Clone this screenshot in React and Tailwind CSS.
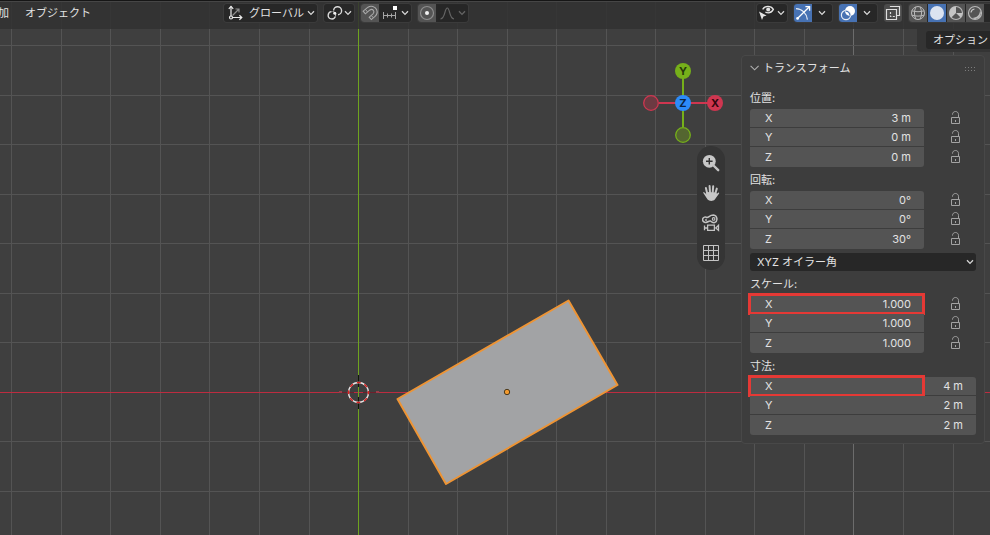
import React from 'react';

const GRID = 49.54;
const ORIGIN_X = 358.56;
const ORIGIN_Y = 392.4;
const steps = Array.from({ length: 81 }, (_, i) => i - 30);

function Scene() {
  return (
    <svg className="absolute inset-0 h-full w-full" aria-hidden="true">
      <g fill="#545454">
        {steps.map((n) => (
          <rect key={`v${n}`} x={Math.floor(ORIGIN_X + n * GRID)} y="0" width="1" height="100%" fill={n === 10 ? '#6c6c6c' : '#545454'} />
        ))}
        {steps.map((n) => (
          <rect key={`h${n}`} x="0" y={Math.floor(ORIGIN_Y + n * GRID)} width="100%" height="1" />
        ))}
      </g>
      <rect x="0" y="392" width="100%" height="1" fill="#bd2c40" />
      <rect x="358" y="0" width="1" height="100%" fill="#6fa31f" />

      {/* selected object */}
      <polygon points="397.5,399 568.5,300.5 617.5,385 446,484" fill="#a2a3a5" stroke="#ee9434" strokeWidth="2" strokeLinejoin="round" />
      <circle cx="507" cy="392" r="2.7" fill="#f39a2e" stroke="#4a3a20" strokeWidth="1" />

      {/* 3D cursor */}
      <g shapeRendering="crispEdges">
        <rect x="342" y="392" width="12" height="1" fill="#6d1f2b" />
        <rect x="363" y="392" width="13" height="1" fill="#6d1f2b" />
        <rect x="339" y="391" width="3" height="2" fill="#9c3c49" />
        <rect x="376" y="391" width="3" height="2" fill="#9c3c49" />
        <rect x="358" y="375" width="1" height="12" fill="#10180a" />
        <rect x="358" y="397" width="1" height="12" fill="#10180a" />
      </g>
      <circle cx="358.5" cy="392.5" r="10" fill="none" stroke="#e8e8e8" strokeWidth="1.3" />
      <circle cx="358.5" cy="392.5" r="10" fill="none" stroke="#d92323" strokeWidth="1.4" strokeDasharray="3.927" strokeDashoffset="2" />
    </svg>
  );
}

function Icon({ children, className = '' }) {
  return (
    <svg width="18" height="18" viewBox="0 0 18 18" fill="none" stroke="#d6d6d6" strokeWidth="1.2" className={`shrink-0 ${className}`} aria-hidden="true">
      {children}
    </svg>
  );
}

function Chevron({ className = '' }) {
  return (
    <svg width="8" height="6" viewBox="0 0 8 6" fill="none" stroke="#d6d6d6" strokeWidth="1.3" className={`shrink-0 ${className}`} aria-hidden="true">
      <path d="M1 1.2 4 4.4 7 1.2" />
    </svg>
  );
}

function Group({ children, className = '' }) {
  return (
    <div className={`flex h-[18px] shrink-0 items-center overflow-hidden rounded-[3px] bg-[#272727] shadow-[0_0_0_1px_#3b3b3b] ${className}`}>
      {children}
    </div>
  );
}

function Header() {
  return (
    <header className="flex h-[29px] shrink-0 items-start border-t border-[#161616] bg-[#313131]/85">
      <div className="flex w-full items-start border-t border-[#464646] pt-0.5">
        <nav className="flex h-[18px] w-56 shrink-0 items-center gap-4 overflow-hidden">
          <button className="-ml-0.5">加</button>
          <button>オブジェクト</button>
        </nav>

        <div className="flex items-center gap-[7px]">
          <Group className="relative w-[93px]">
            <Icon className="absolute left-0.5">
              <path d="M5 12V2.5M6.5 13.5H15.5" stroke="#ececec" />
              <path d="M2.8 4.8 5 2.3 7.2 4.8M13.4 11.3 15.8 13.5 13.4 15.7" stroke="#ececec" />
              <circle cx="5" cy="13.5" r="1.5" stroke="#ececec" />
              <path d="M6.5 11.5 12.5 5.5M9.5 5H13V8.5" stroke="#8e8e8e" />
            </Icon>
            <select aria-label="トランスフォーム座標系" className="h-full w-full appearance-none pl-[25px] outline-none">
              <option>グローバル</option>
            </select>
            <Chevron className="pointer-events-none absolute right-[2px]" />
          </Group>

          <button aria-label="ピボットポイント">
            <Group className="w-[30px] pl-0.5">
              <Icon>
                <path d="M5.6 7.6A3.7 3.7 0 1 0 9.4 12.4M7.6 6.6A4 4 0 1 1 12 10.7" stroke="#d9d9d9" strokeWidth="1.4" />
                <path d="M6.6 7.6A3.7 3.7 0 0 1 9.6 11.8" stroke="#d9d9d9" strokeWidth="1" />
                <circle cx="8.8" cy="9.2" r="1.5" fill="#f2f2f2" stroke="none" />
              </Icon>
              <Chevron />
            </Group>
          </button>

          <Group className="w-[50px]">
            <button aria-label="スナップ" className="bg-[#545454]">
              <Icon>
                <path
                  d="M2.2 7.2 7 3.2C10 1.2 14 2.4 15.6 5.6 16.6 8 16 10.6 14 12.4L10.4 15.6 8.2 13.2 12 9.8C13.2 8.6 13.2 7.4 12.4 6.4 11.4 5.2 10 5.2 8.6 6.2L4.4 9.8Z"
                  stroke="#a9a9a9"
                  strokeWidth="1.1"
                />
                <path d="M4.4 5.4 6.6 8M10.2 11.4 12.4 13.8" stroke="#a9a9a9" strokeWidth="1" />
              </Icon>
            </button>
            <button aria-label="スナップ先" className="flex h-full items-center gap-[3px] pl-1">
              <svg width="15" height="18" viewBox="0 0 15 18" fill="none" stroke="#a6a6a6" aria-hidden="true">
                <path d="M0.5 8V15M4.5 9.5V13.5M8.5 9.5V13.5M12.5 8V15M0 11.5H13" />
                <rect x="10" y="2" width="4" height="4" fill="#fff" stroke="none" />
              </svg>
              <Chevron />
            </button>
          </Group>

          <Group className="w-[50px] bg-[#2f2f2f]">
            <button aria-label="プロポーショナル編集" className="bg-[#545454]">
              <Icon>
                <circle cx="9" cy="9" r="6.5" stroke="#8f8f8f" />
                <circle cx="9" cy="9" r="2" fill="#f2f2f2" stroke="none" />
              </Icon>
            </button>
            <button aria-label="減衰タイプ" disabled className="flex h-full items-center gap-[3px] pl-1 opacity-35">
              <svg width="15" height="18" viewBox="0 0 15 18" fill="none" stroke="#d6d6d6" strokeWidth="1.2" aria-hidden="true">
                <path d="M0.5 15C5.5 14.5 4.5 4 7.3 4S9 14.5 14 15" />
              </svg>
              <Chevron />
            </button>
          </Group>
        </div>

        <div className="ml-auto flex items-center gap-[7px]">
          <button aria-label="オブジェクトの種類の可視性">
            <Group className="w-[30px] pl-0.5">
              <Icon>
                <path d="M3.6 5.4C6 1.4 11.8 1.4 14.4 5.4 12.4 8.8 9 9.4 6.4 8.2" stroke="#e4e4e4" strokeWidth="1.3" />
                <circle cx="9.2" cy="5.4" r="2" fill="#e4e4e4" stroke="none" />
                <path d="M0 7.6 7.6 11.6 4.4 12.4 3 16Z" fill="#e4e4e4" stroke="none" />
              </Icon>
              <Chevron />
            </Group>
          </button>

          <Group className="w-[38px]">
            <button aria-label="ギズモ" className="bg-[#4772b3]">
              <Icon>
                <path d="M2 4.6C8 4.8 12.8 9.4 13.4 15.6" stroke="#e8edf5" strokeWidth="1.2" />
                <path d="M4.2 13.8 15.4 2.8M11.4 2.6H15.6V6.8" stroke="#fff" strokeWidth="1.3" />
                <circle cx="3.6" cy="14.4" r="1.4" fill="#fff" stroke="none" />
              </Icon>
            </button>
            <button aria-label="ギズモ設定" className="flex h-full w-5 items-center justify-center"><Chevron /></button>
          </Group>

          <Group className="w-[38px]">
            <button aria-label="オーバーレイ" className="bg-[#4772b3]">
              <Icon>
                <circle cx="11" cy="7" r="5" fill="#fff" stroke="none" />
                <circle cx="7" cy="11" r="4.6" stroke="#e8edf5" strokeWidth="1.2" />
                <path d="M6.6 7.2A4.8 4.8 0 0 1 11 11.6" stroke="#4772b3" strokeWidth="1.2" />
              </Icon>
            </button>
            <button aria-label="オーバーレイ設定" className="flex h-full w-5 items-center justify-center"><Chevron /></button>
          </Group>

          <button aria-label="透過表示" className="overflow-hidden rounded-[3px] bg-[#4b4b4b]">
            <Icon>
              <path d="M6.5 3V2.5H15.5V11.5H13M2.5 5.5H12.5V15.5H2.5Z" stroke="#dedede" />
              <path d="M6.5 8V12.5H11" stroke="#dedede" strokeDasharray="2 1.4" />
            </Icon>
          </button>

          <Group className="w-[81px] gap-px rounded-r-none">
            <button aria-label="ワイヤーフレーム" className="bg-[#545454]">
              <Icon>
                <g stroke="#b9b9b9" strokeWidth="1">
                  <circle cx="9" cy="9" r="6.5" />
                  <path d="M6.8 3C5 7 5 11 6.8 15M11.2 3C13 7 13 11 11.2 15M2.8 6.8C7 8 11 8 15.2 6.8M2.8 11.2C7 12.4 11 12.4 15.2 11.2" />
                </g>
              </Icon>
            </button>
            <button aria-label="ソリッド" className="bg-[#4772b3]">
              <Icon><circle cx="9" cy="9" r="7" fill="#dbe3f0" stroke="none" /></Icon>
            </button>
            <button aria-label="マテリアルプレビュー" className="bg-[#545454]">
              <Icon>
                <circle cx="9" cy="9" r="6.5" stroke="#b9b9b9" />
                <path d="M9 9V2.5A6.5 6.5 0 0 0 4.4 13.6ZM9 9H15.5A6.5 6.5 0 0 1 13.6 13.6Z" fill="#c4c4c4" stroke="none" />
              </Icon>
            </button>
            <button aria-label="レンダー" className="bg-[#545454]">
              <Icon>
                <circle cx="9" cy="9" r="6.5" stroke="#b9b9b9" />
                <path d="M5 8.5A4 4 0 0 1 8.5 5" stroke="#c4c4c4" />
                <path d="M14 6C14 11 11 13.8 6 14L9 15.2 13.5 13.5 15 9Z" fill="#b9b9b9" stroke="none" />
              </Icon>
            </button>
          </Group>
        </div>
      </div>
    </header>
  );
}

function AxisGizmo() {
  return (
    <svg width="83" height="82" viewBox="0 0 83 82" role="img" aria-label="XYZ" className="font-bold" fontSize="11" textAnchor="middle">
      <path d="M41 41V9M41 41V65" stroke="#76b01a" strokeWidth="2" />
      <path d="M17 41H73" stroke="#cf3650" strokeWidth="2" />
      <circle cx="9" cy="41" r="7.3" fill="#6c3a42" stroke="#cf3650" strokeWidth="1.3" />
      <circle cx="41" cy="73" r="7.3" fill="#546630" stroke="#76b01a" strokeWidth="1.3" />
      <circle cx="41" cy="9" r="8" fill="#76b01a" />
      <circle cx="73" cy="41" r="8" fill="#cf3650" />
      <circle cx="41" cy="41" r="8" fill="#2c8bfa" />
      <text x="41" y="13" fill="#26380a">Y</text>
      <text x="73" y="45" fill="#33060e">X</text>
      <text x="41" y="45" fill="#0a2444">Z</text>
    </svg>
  );
}

function NavButton({ label, children }) {
  return (
    <button aria-label={label} className="flex h-[30px] w-7 items-center justify-center">
      <svg width="18" height="18" viewBox="0 0 18 18" fill="none" stroke="#c4c4c4" strokeWidth="1.2" className="shrink-0" aria-hidden="true">
        {children}
      </svg>
    </button>
  );
}

function NavTools() {
  return (
    <div className="flex flex-col rounded-full bg-[#353535] py-0.5">
      <NavButton label="ズーム">
        <circle cx="7.3" cy="7.3" r="6.4" fill="#c8c8c8" stroke="none" />
        <path d="M11.5 11.5 16.2 16.2" strokeWidth="2.4" strokeLinecap="round" />
        <path d="M7.3 4V10.6M4 7.3H10.6" stroke="#323232" strokeWidth="1.4" />
      </NavButton>
      <NavButton label="視点の移動">
        <g strokeWidth="2" strokeLinecap="round">
          <path d="M5.2 9.5 3.9 4M8 8.5 7.6 2M10.7 8.5 11.2 2.2M13.3 9.5 14.8 4.6" />
        </g>
        <path d="M1 8.4C2.4 7.6 3.4 9.2 4.4 10.4L4.2 8 14.3 8.6C14.6 10.4 15.3 9.6 16.4 8.6 17.8 8.6 17.2 9.8 16.2 10.8L12.8 15.6C11 17.6 7.2 17.4 5.6 15.6Z" fill="#c8c8c8" stroke="none" />
      </NavButton>
      <NavButton label="カメラビュー">
        <path d="M3.4 8.4A2.7 2.7 0 1 1 5 3.6C7 3.4 7.6 1 11.4 1A4 4 0 0 1 12.6 8.6C10.8 9 9.6 8 8.4 7 6.8 6.4 6 8.6 3.4 8.4" strokeWidth="1.5" />
        <circle cx="11.6" cy="4.9" r="1.3" strokeWidth="1.1" />
        <circle cx="4" cy="6" r="0.9" fill="#c4c4c4" stroke="none" />
        <path d="M5.6 11.2H12.4V16.4H5.6ZM2.5 11.5V16.2M2.4 14H5.6M16.5 11.4V16.4L13.8 14Z" strokeWidth="1.3" />
      </NavButton>
      <NavButton label="透視投影/平行投影">
        <path d="M1.5 1.5H16.5V16.5H1.5ZM6.5 1.5V16.5M11.5 1.5V16.5M1.5 6.5H16.5M1.5 11.5H16.5" strokeWidth="1" />
      </NavButton>
    </div>
  );
}

function LockButton({ label }) {
  return (
    <button aria-label={label} className="flex items-center justify-center">
      <svg width="10" height="14" viewBox="0 0 10 14" fill="none" stroke="#a3a3a3" aria-hidden="true">
        <path d="M0.5 6.5H8.5V12.5H0.5ZM4.5 9V11" />
        <path d="M1.5 3.6C1.5 1.6 2.8 0.5 4.5 0.5S7.5 1.8 7.5 3.4V6.5" />
      </svg>
    </button>
  );
}

function Section({ title, values, lockable = true, highlight = false }) {
  return (
    <fieldset>
      <legend className="flex h-6 items-center pt-0.5">{title}:</legend>
      <div className="flex">
        <div className="grid h-[58px] flex-1 grid-rows-[18px_18px_20px] gap-px">
          {values.map((value, i) => (
            <label
              key={i}
              className="relative flex min-h-0 items-center bg-[#545454] pr-[13px] pl-[15px] first:rounded-t-[3px] last:rounded-b-[3px]"
            >
              <span>{'XYZ'[i]}</span>
              <input defaultValue={value} className="w-full min-w-0 bg-transparent text-right outline-none" />
              {highlight && i === 0 && (
                <span className="pointer-events-none absolute -top-0.5 -left-0.5 h-[22px] w-[177px] border-3 border-[#e53935]" />
              )}
            </label>
          ))}
        </div>
        {lockable && (
          <div className="grid w-[52px] grid-rows-[18px_20px_20px] pl-3">
            {values.map((_, i) => (
              <LockButton key={i} label={`${title} ${'XYZ'[i]} をロック`} />
            ))}
          </div>
        )}
      </div>
    </fieldset>
  );
}

function TransformPanel() {
  return (
    <section className="mr-[5px] rounded-[4px] border border-[#484848] bg-[#3d3d3d] px-2 pb-2">
      <div className="mb-[5px] flex h-6 items-center">
        <button className="flex items-center gap-[3px]">
          <svg width="10" height="6" viewBox="0 0 10 6" fill="none" stroke="#b0b0b0" strokeWidth="1.1" aria-hidden="true">
            <path d="M0.6 0.8 4.6 4.8 8.6 0.8" />
          </svg>
          トランスフォーム
        </button>
        <svg width="11" height="5" viewBox="0 0 11 5" fill="#7c7c7c" className="ml-auto" aria-hidden="true">
          {[0, 3, 6, 9].map((x) => (
            <path key={x} d={`M${x} 1h1v1h-1zM${x} 4h1v1h-1z`} />
          ))}
        </svg>
      </div>

      <Section title="位置" values={['3 m', '0 m', '0 m']} />
      <Section title="回転" values={['0°', '0°', '30°']} />
      <div className="relative mt-1 flex h-[18px] items-center rounded-[3px] bg-[#272727]">
        <select aria-label="回転モード" className="h-full w-full appearance-none pl-[7px] outline-none">
          <option>XYZ オイラー角</option>
        </select>
        <Chevron className="pointer-events-none absolute right-0.5" />
      </div>
      <Section title="スケール" values={['1.000', '1.000', '1.000']} highlight />
      <Section title="寸法" values={['4 m', '2 m', '2 m']} lockable={false} highlight />
    </section>
  );
}

export default function App() {
  return (
    <div className="relative h-screen overflow-hidden bg-[#3f3f3f] font-['Inter','Noto_Sans_CJK_JP',sans-serif] text-[11px] leading-4 whitespace-nowrap text-[#e2e2e2]">
      <Scene />
      <div className="relative flex h-full flex-col">
        <Header />
        <main className="flex min-h-0 flex-1">
          <div className="flex flex-1 flex-col items-end gap-0.5 pt-[33px] pr-4">
            <AxisGizmo />
            <NavTools />
          </div>
          <aside className="flex w-[249px] shrink-0 flex-col gap-[3px]">
            <div className="ml-auto flex h-[23px] rounded-bl-[4px] bg-[#343434] pt-0.5 pl-[9px]">
              <button className="h-[18px] rounded-l-[3px] bg-[#272727] pr-0.5 pl-[7px]">オプション</button>
            </div>
            <TransformPanel />
          </aside>
        </main>
      </div>
    </div>
  );
}
